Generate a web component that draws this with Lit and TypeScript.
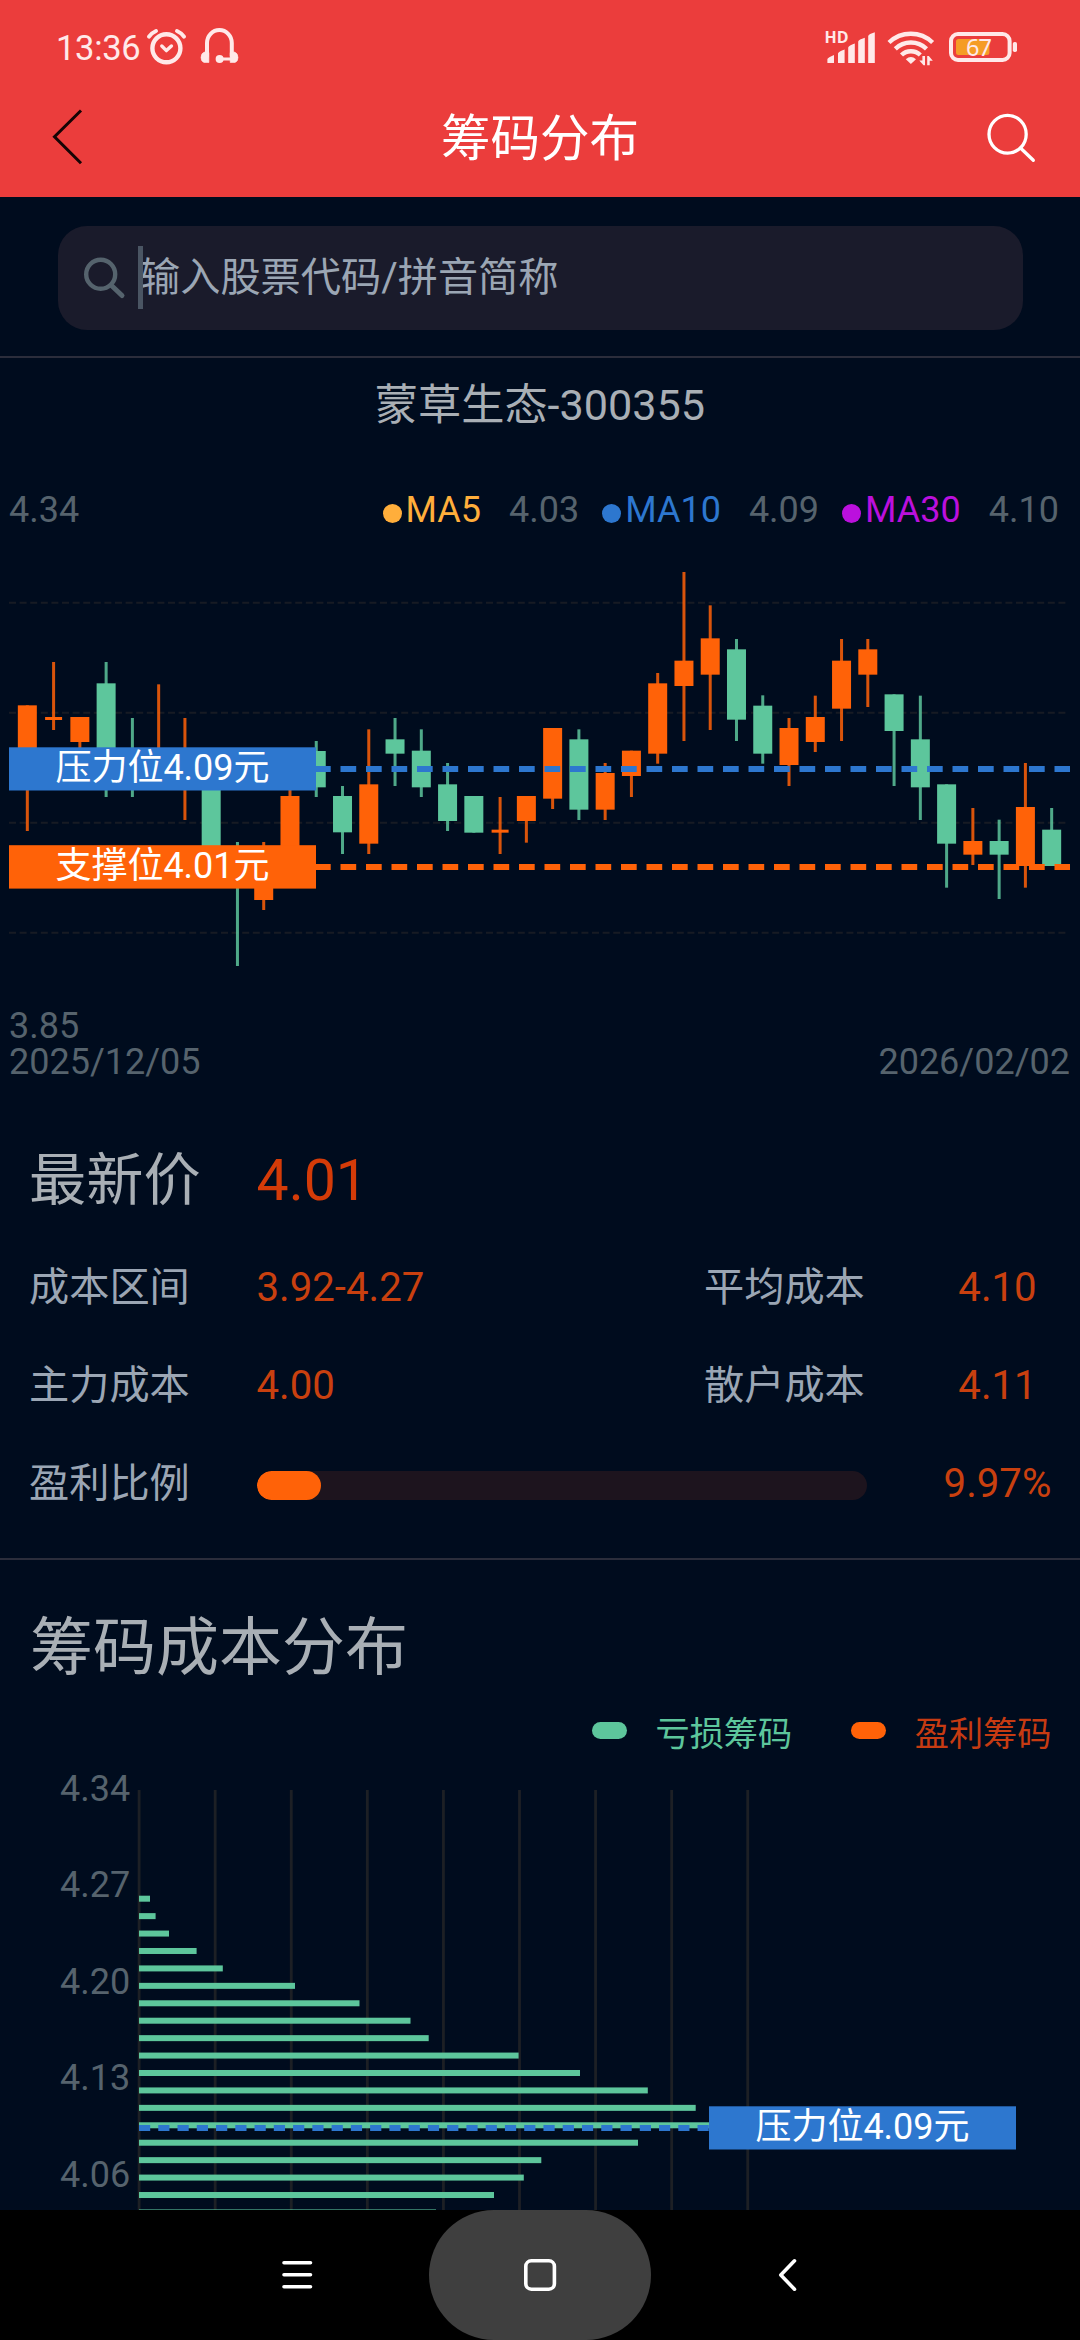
import { LitElement, html, svg, css } from "lit";
import { customElement } from "lit/decorators.js";

const UP = "#ff6208";
const DOWN = "#5dc69c";
const PRESS = "#2d77cf";

type Candle = [up: number, high: number, top: number, bottom: number, low: number];

// Vertical extents are in thirds of a pixel below the top of the plot.
const CANDLES: Candle[] = [
  [1, 496, 496, 700, 873],
  [1, 366, 531, 540, 570],
  [1, 531, 531, 606, 640],
  [0, 366, 430, 700, 771],
  [0, 534, 650, 720, 771],
  [1, 433, 650, 720, 740],
  [1, 534, 650, 720, 840],
  [0, 700, 700, 980, 980],
  [0, 906, 940, 1020, 1278],
  [1, 906, 960, 1080, 1110],
  [1, 740, 768, 960, 960],
  [0, 603, 633, 742, 771],
  [0, 738, 768, 877, 942],
  [1, 568, 733, 911, 942],
  [0, 534, 598, 641, 738],
  [0, 568, 632, 742, 771],
  [0, 669, 733, 843, 873],
  [0, 768, 768, 878, 878],
  [1, 771, 869, 878, 942],
  [1, 768, 768, 843, 908],
  [1, 564, 564, 776, 807],
  [0, 568, 598, 809, 840],
  [1, 669, 699, 809, 840],
  [1, 632, 632, 708, 771],
  [1, 399, 430, 641, 671],
  [1, 96, 362, 438, 603],
  [1, 196, 295, 404, 570],
  [0, 297, 328, 539, 603],
  [0, 466, 497, 641, 671],
  [1, 534, 564, 675, 738],
  [1, 467, 531, 606, 636],
  [1, 297, 362, 506, 603],
  [1, 297, 328, 404, 501],
  [0, 463, 463, 573, 738],
  [0, 467, 598, 742, 840],
  [0, 733, 733, 911, 1043],
  [1, 804, 903, 944, 975],
  [0, 839, 903, 944, 1077],
  [1, 669, 801, 978, 1043],
  [0, 804, 869, 978, 978],
];

const CHIP_ENDS = [
  150, 155.6, 169, 196.6, 222.8, 295, 359.5, 410.5, 428.7, 518.6, 580, 647.8,
  695.7, 720, 638, 541.3, 523.8, 494, 436,
];

const PRICE_TICKS = ["4.34", "4.27", "4.20", "4.13", "4.06"];

const AVERAGES = [
  { name: "MA5", value: "4.03", cls: "ma5" },
  { name: "MA10", value: "4.09", cls: "ma10" },
  { name: "MA30", value: "4.10", cls: "ma30" },
];

@customElement("status-bar")
class StatusBar extends LitElement {
  static styles = css`
    :host { display: flex; height: 76px; color: #ffe9e9; padding: 0 57px 0 56px; justify-content: space-between; }
    .left, .right { display: flex; align-items: flex-start; }
    .time { font-size: 34.5px; line-height: 40px; padding-top: 28px; letter-spacing: -0.3px; width: 88px; white-space: nowrap; }
    svg { display: block; }
    .hd { font: 700 16px "Open Sans", "Noto Sans", sans-serif; }
    .pct { font: 400 23.5px "Noto Sans", sans-serif; }
  `;
  render() {
    return html`
      <div class="left">
        <span class="time">13:36</span>
        <svg width="100" height="76" viewBox="144 0 100 76" fill="none" stroke="#ffe9e9" stroke-linecap="round" stroke-linejoin="round">
          <circle cx="166.4" cy="48.3" r="14" stroke-width="4.4"/>
          <path d="M161.8 46 L166.4 50.6 L171.4 46" stroke-width="3.4"/>
          <path d="M149 36.6 Q151.5 33 156 31M184 36.6 Q181.5 33 177 31" stroke-width="4" />
          <path d="M207 56 V43 A12.4 13 0 0 1 231.8 43 V56" stroke-width="4"/>
          <path d="M208.9 53 V62.5 H204 Q201 61.5 201 57.5 Q201 53 204.5 52 Z M230.2 53 V62.5 H235 Q238 61.5 238 57.5 Q238 53 234.5 52 Z" fill="#ffe9e9" stroke-width="0.6"/>
          <path d="M220 59 H231" stroke-width="3"/>
          <circle cx="219.6" cy="59" r="4" fill="#ffe9e9" stroke="none"/>
        </svg>
      </div>
      <div class="right">
        <svg width="203" height="76" viewBox="820 0 203 76" fill="#ffe9e9">
          <text class="hd" x="824.5" y="43">HD</text>
          <path d="M827.4 63V59Q828 57.5 834 55V63ZM838 63V53.5Q838.6 51.5 844.6 49.5V63ZM848.2 63V47.5Q848.8 45.5 854.8 43.5V63ZM858.2 63V41.5Q858.8 39.5 864.8 37.7V63ZM868.2 63V36Q868.8 34 874.8 32.2V63Z"/>
          <g fill="none" stroke="#ffe9e9" stroke-width="4.4">
            <path d="M889 42.5 A31.5 31.5 0 0 1 932.6 42.5"/>
            <path d="M895.3 48.8 A22.5 22.5 0 0 1 926.5 48.8"/>
            <path d="M901.5 55 A13.5 13.5 0 0 1 920.3 55"/>
          </g>
          <path d="M910.9 64 L905.8 59.3 Q910.9 54.5 916 59.3Z"/>
          <path d="M919.3 60.5H922.4V56H925V65.3H923.5ZM927.2 65.3V56H928.8L932.8 60.8H929.7V65.3Z"/>
          <rect x="951" y="34" width="58.6" height="26" rx="7" fill="none" stroke="#ffe9e9" stroke-width="4"/>
          <rect x="956" y="39" width="33.4" height="16" rx="2.5" fill="#f59c25"/>
          <text class="pct" x="966" y="56" textLength="26">67</text>
          <rect x="1012.8" y="42" width="4.2" height="10" rx="1.8"/>
        </svg>
      </div>
    `;
  }
}

@customElement("title-bar")
class TitleBar extends LitElement {
  static styles = css`
    :host { display: flex; height: 121px; align-items: center; justify-content: space-between; padding: 0 40px; }
    .title { font-size: 49.5px; line-height: 60px; color: #fff; padding-top: 4px; }
    svg { display: block; }
  `;
  render() {
    return html`
      <svg width="60" height="121" viewBox="40 76 60 121" fill="none" stroke="#160405" stroke-width="3">
        <path d="M81 110.5 L54.5 136.7 L81 163.3"/>
      </svg>
      <span class="title">筹码分布</span>
      <svg width="60" height="121" viewBox="980 76 60 121" fill="none" stroke="#fff" stroke-width="3.3" stroke-linecap="round">
        <ellipse cx="1007.6" cy="134.2" rx="18.6" ry="18.9"/>
        <path d="M1020.5 148 L1033.3 160.3"/>
      </svg>
    `;
  }
}

@customElement("candle-chart")
class CandleChart extends LitElement {
  static styles = css`
    :host { display: block; height: 460px; }
    svg { display: block; }
    .tag { font-size: 36px; fill: #fff; text-anchor: middle; }
  `;
  private candle([up, high, top, bottom, low]: Candle, i: number) {
    const cx = 27.33 + i * 26.265;
    const color = up ? UP : DOWN;
    const w = bottom - top < 12 ? 17 : 19;
    return svg`
      <rect x=${cx - 1.5} y=${high / 3} width="3" height=${(low - high) / 3} fill=${color} opacity="0.85"/>
      <rect x=${cx - w / 2} y=${top / 3} width=${w} height=${(bottom - top) / 3} fill=${color}/>
    `;
  }
  render() {
    return html`
      <svg width="1080" height="460" viewBox="0 0 1080 460">
        ${[62.8, 172.8, 282.8, 392.8].map(
          (y) => svg`<path d="M9 ${y}H1067" stroke="#171b24" stroke-width="2" stroke-dasharray="7 3.6"/>`
        )}
        ${CANDLES.map((c, i) => this.candle(c, i))}
        <path d="M9 229H1070" stroke=${PRESS} stroke-width="6" stroke-dasharray="15.7 9.8"/>
        <path d="M9 327H1070" stroke=${UP} stroke-width="6" stroke-dasharray="15.7 9.8"/>
        <rect x="9" y="207.3" width="307" height="43.2" fill=${PRESS}/>
        <rect x="9" y="305.2" width="307" height="43.4" fill=${UP}/>
        <text class="tag" x="162.5" y="239.6">压力位4.09元</text>
        <text class="tag" x="162.5" y="337.6">支撑位4.01元</text>
      </svg>
    `;
  }
}

@customElement("chip-chart")
class ChipChart extends LitElement {
  static styles = css`
    :host { display: block; height: 456px; }
    svg { display: block; }
    .tick { font-size: 36px; fill: #56636d; text-anchor: end; }
    .tag { font-size: 36px; fill: #fff; text-anchor: middle; }
  `;
  render() {
    return html`
      <svg width="1080" height="456" viewBox="0 0 1080 456">
        ${PRICE_TICKS.map((t, i) => svg`<text class="tick" x="130.3" y=${Math.floor(47 + i * 96.5)}>${t}</text>`)}
        ${Array.from({ length: 9 }, (_, i) => svg`<rect x=${137.7 + i * 76.08} y="36" width="2.8" height="420" fill="#1d2025"/>`)}
        ${CHIP_ENDS.map((x, i) => svg`<rect x="139" y=${141.7 + i * 17.43} width=${x - 139} height="6" fill=${DOWN}/>`)}
        <path d="M139 374H709" stroke=${PRESS} stroke-width="6" stroke-dasharray="11.2 8.06"/>
        <rect x="709" y="352.3" width="307" height="43.2" fill=${PRESS}/>
        <text class="tag" x="862.5" y="384.7">压力位4.09元</text>
      </svg>
    `;
  }
}

@customElement("nav-bar")
class NavBar extends LitElement {
  static styles = css`
    :host { display: flex; height: 130px; background: #000; align-items: center; justify-content: center; gap: 106px; }
    .home { width: 222px; height: 130px; border-radius: 65px; background: #3f3f3f; display: flex; align-items: center; justify-content: center; }
    svg { display: block; }
  `;
  render() {
    return html`
      <svg width="50" height="50" fill="none" stroke="#fff" stroke-width="3.6" stroke-linecap="round" viewBox="273 2250 50 50">
        <path d="M284 2262.7H310.5M284 2274.8H310.5M284 2286.8H310.5"/>
      </svg>
      <div class="home">
        <svg width="50" height="50" fill="none" stroke="#fff" stroke-width="3.6" viewBox="515 2250 50 50">
          <rect x="525.8" y="2260.8" width="28.6" height="28.4" rx="5.5"/>
        </svg>
      </div>
      <svg width="50" height="50" fill="none" stroke="#fff" stroke-width="3.6" stroke-linecap="round" stroke-linejoin="round" viewBox="756.5 2250 50 50">
        <path d="M794 2260.8 L780.3 2275 L794 2289.2"/>
      </svg>
    `;
  }
}

@customElement("app-root")
class AppRoot extends LitElement {
  static styles = css`
    :host {
      display: flex; flex-direction: column; width: 1080px; height: 2340px; overflow: hidden;
      background: #000c1e; color: #56636d;
      font-family: Roboto, "Noto Sans CJK SC", sans-serif; font-size: 36px;
    }
    .top { background: #eb3d3c; height: 197px; flex: none; }
    .search-wrap { padding: 29px 57px 26px 58px; border-bottom: 2px solid #2b2d3b; }
    .search {
      position: relative; height: 104px; border-radius: 29px; background: #1a1b2b; display: flex; align-items: center;
      padding-left: 24px; gap: 14px; font-size: 40.2px; line-height: 104px; color: #9ba6b4;
    }
    .search svg { display: block; }
    .caret { position: absolute; left: 80px; top: 20px; width: 5px; height: 63px; background: #4a5563; }
    .stock { text-align: center; font-size: 43.2px; line-height: 96px; color: #a9afb5; }
    .legend { display: flex; justify-content: space-between; margin-top: 35px; height: 51px; line-height: 43px; padding: 0 21px 0 9px; }
    .averages { display: flex; gap: 23px; }
    .average { display: flex; align-items: flex-start; }
    .name { display: flex; margin-right: 28px; }
    .dot { width: 19px; height: 19px; border-radius: 50%; background: currentColor; margin: 15px 4px 0 0; }
    .ma5 { color: #ffae3b; }
    .ma10 { color: #2d77cf; }
    .ma30 { color: #bb10dd; }
    .axis { margin-top: 8px; line-height: 36px; padding: 0 10px 0 9px; }
    .dates { display: flex; justify-content: space-between; }
    .facts { padding: 43px 28px 25px 29px; border-bottom: 2px solid #2b2d3b; font-size: 40.2px; line-height: 48px; color: #9ba6b4; }
    .row { display: grid; grid-template-columns: 227.5px 1fr 239px 109px; align-items: center; height: 98px; }
    .latest { height: 116px; font-size: 57.2px; line-height: 68px; color: #a9afb5; }
    .value { color: #c9400f; }
    .latest .value { color: #d43b08; }
    .num { text-align: center; color: #c9400f; }
    .ratio { grid-template-columns: 227.5px 610.5px 1fr 109px; }
    .ratio .num { grid-column: 4; }
    .track { height: 29px; border-radius: 15px; background: #1d141e; overflow: hidden; margin-top: 2px; }
    .fill { height: 29px; border-radius: 15px; background: #ff6208; }
    .heading { padding: 58px 0 0 30px; font-size: 63px; line-height: 60px; color: #a9afb5; }
    .keys { margin-top: 36px; display: flex; justify-content: flex-end; gap: 59px; padding-right: 28.5px; font-size: 34.2px; line-height: 40px; }
    .key { display: flex; align-items: center; gap: 28.5px; }
    .pill { width: 35px; height: 17px; border-radius: 9px; margin-bottom: 7px; }
    .loss { color: #5dc69c; }
    .gain { color: #c63b12; }
    .loss .pill { background: #5dc69c; }
    .gain .pill { background: #ff6208; }
  `;
  private ratio = 10.6;
  render() {
    return html`
      <header class="top"><status-bar></status-bar><title-bar></title-bar></header>
      <div class="search-wrap">
        <div class="search">
          <svg width="44" height="44" viewBox="82 256 44 44" fill="none" stroke="#55636d" stroke-width="4.4" stroke-linecap="round">
            <circle cx="100.7" cy="274.2" r="14.5"/><path d="M112 286 L122 295.5" stroke-width="5"/>
          </svg>
          <i class="caret"></i>
          <span>输入股票代码/拼音简称</span>
        </div>
      </div>
      <div class="stock">蒙草生态-300355</div>
      <div class="legend">
        <span>4.34</span>
        <div class="averages">
          ${AVERAGES.map(
            (a) => html`<div class="average"><span class="name ${a.cls}"><i class="dot"></i>${a.name}</span><span>${a.value}</span></div>`
          )}
        </div>
      </div>
      <candle-chart></candle-chart>
      <div class="axis">
        <div>3.85</div>
        <div class="dates"><span>2025/12/05</span><span>2026/02/02</span></div>
      </div>
      <section class="facts">
        <div class="row latest"><span>最新价</span><span class="value">4.01</span></div>
        <div class="row"><span>成本区间</span><span class="value">3.92-4.27</span><span>平均成本</span><span class="num">4.10</span></div>
        <div class="row"><span>主力成本</span><span class="value">4.00</span><span>散户成本</span><span class="num">4.11</span></div>
        <div class="row ratio">
          <span>盈利比例</span>
          <div class="track"><div class="fill" style="width:${this.ratio}%"></div></div>
          <span class="num">9.97%</span>
        </div>
      </section>
      <div class="heading">筹码成本分布</div>
      <div class="keys">
        <span class="key loss"><i class="pill"></i>亏损筹码</span>
        <span class="key gain"><i class="pill"></i>盈利筹码</span>
      </div>
      <chip-chart></chip-chart>
      <nav-bar></nav-bar>
    `;
  }
}
